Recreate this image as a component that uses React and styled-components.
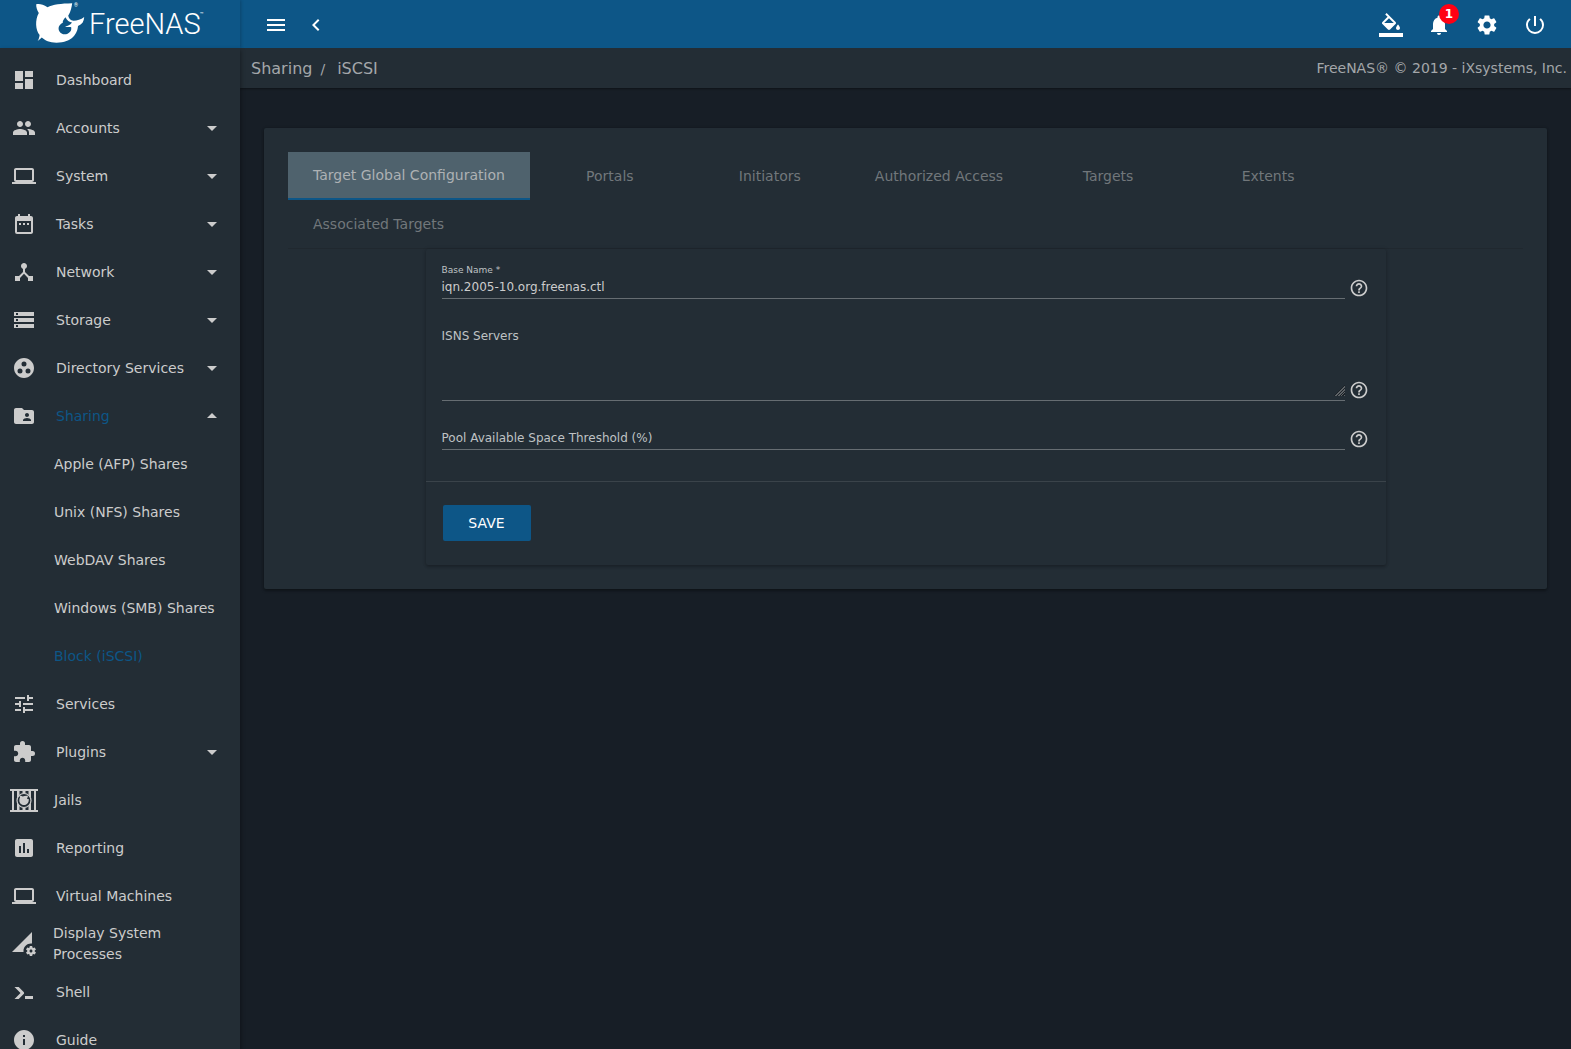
import React, {useState} from 'react';
import styled, {createGlobalStyle, css} from 'styled-components';
import {
    MdDashboard, MdPeople, MdLaptop, MdDateRange, MdDeviceHub, MdStorage, MdGroupWork,
    MdFolderShared, MdTune, MdExtension, MdAssessment, MdPermDataSetting, MdInfo,
    MdArrowDropDown, MdArrowDropUp, MdMenu, MdChevronLeft, MdNotifications, MdSettings,
    MdPowerSettingsNew, MdHelpOutline
} from 'react-icons/md';

const GlobalStyle = createGlobalStyle`
    *, *::before, *::after{
        box-sizing: border-box;
    }
    body{
        margin: 0;
        background-color: #171e26;
        color: #cccccc;
        font-family: 'DejaVu Sans', sans-serif;
        font-size: 14px;
    }
    button, input, textarea{
        font-family: inherit;
    }
`

const Page = styled.div`
    display: flex;
    flex-direction: column;
    height: 100vh;
`

const TopBar = styled.header`
    display: flex;
    flex-shrink: 0;
    height: 48px;
    background-color: #0d5687;
    color: white;
`

const Brand = styled.a`
    display: flex;
    width: 240px;
    padding-left: 34px;
    color: white;
    text-decoration: none;
    box-shadow: 1px 0 3px rgba(0,0,0,.2);
    svg{
        width: 172px;
        height: 48px;
    }
`

const TopTools = styled.div`
    display: flex;
    flex: 1;
    align-items: center;
    padding: 2px 12px 0 16px;
`

const Spacer = styled.div`
    flex: 1;
`

const IconButton = styled.button`
    position: relative;
    display: flex;
    align-items: center;
    justify-content: center;
    width: ${props => props.$narrow ? '40px' : '48px'};
    height: 46px;
    padding: 0;
    border: none;
    background: none;
    color: white;
    cursor: pointer;
    svg{
        width: 24px;
        height: 24px;
    }
`

const Badge = styled.span`
    position: absolute;
    top: 2px;
    left: 24px;
    width: 20px;
    height: 20px;
    border-radius: 50%;
    background-color: #ff0013;
    font-size: 12px;
    font-weight: bold;
    line-height: 20px;
    text-align: center;
`

const Body = styled.div`
    display: flex;
    flex: 1;
    min-height: 0;
`

const SideNav = styled.nav`
    z-index: 1;
    flex-shrink: 0;
    width: 240px;
    padding-top: 8px;
    background-color: #232d35;
    box-shadow: 1px 2px 4px rgba(0,0,0,.35);
    overflow-y: auto;
    scrollbar-width: none;
`

const NavLink = styled.a`
    display: flex;
    align-items: center;
    height: 48px;
    padding: 0 16px 0 12px;
    color: ${props => props.$active ? '#0d5687' : '#cccccc'};
    line-height: 21px;
    text-decoration: none;
    span{
        flex: 1;
        padding-left: 20px;
    }
    svg{
        flex-shrink: 0;
        width: 24px;
        height: 24px;
        color: #cccccc;
    }
    ${props => props.$wide && css`
        padding-left: 10px;
        span{
            padding-left: 16px;
        }
        svg{
            width: 28px;
            height: 28px;
        }
    `}
    ${props => props.$tight && css`
        padding-right: 48px;
        span{
            padding-left: 17px;
        }
    `}
`

const SubLink = styled(NavLink)`
    padding-left: 54px;
    span{
        padding-left: 0;
    }
`

const Main = styled.main`
    flex: 1;
    min-width: 0;
    overflow-y: auto;
`

const Crumbs = styled.div`
    display: flex;
    align-items: center;
    justify-content: space-between;
    height: 40px;
    padding: 0 4px 0 11px;
    background-color: #232d35;
    box-shadow: 0 1px 2px rgba(0,0,0,.4);
    color: #a3a7aa;
`

const Trail = styled.div`
    display: flex;
    align-items: center;
    font-size: 16px;
    a{
        color: inherit;
        text-decoration: none;
    }
    span{
        padding: 2px 12px 0 8px;
        font-size: 14px;
    }
`

const Panel = styled.section`
    margin: 40px 24px 24px;
    padding: 24px;
    border-radius: 2px;
    background-color: #232d35;
    box-shadow: 0 2px 3px rgba(0,0,0,.3), 0 0 3px rgba(0,0,0,.2);
`

const Tabs = styled.div`
    display: flex;
    flex-wrap: wrap;
    border-bottom: 1px solid #20282f;
`

const Tab = styled.button`
    min-width: 160px;
    height: 48px;
    padding: 0 25px;
    border: none;
    border-bottom: ${props => props.$active ? '2px solid #0d5687' : 'none'};
    background-color: ${props => props.$active ? '#4f626d' : 'transparent'};
    color: ${props => props.$active ? '#adb1b4' : '#71777b'};
    font-size: 14px;
    cursor: pointer;
`

const FormCard = styled.form`
    max-width: 960px;
    margin: 0 auto;
    border-radius: 2px;
    box-shadow: 0 2px 3px rgba(0,0,0,.2), 0 0 4px rgba(0,0,0,.14);
`

const Fields = styled.div`
    display: flex;
    flex-direction: column;
    gap: 30px;
    padding: 15px 16px 31px;
    border-bottom: 1px solid #3a434a;
`

const Field = styled.div`
    display: flex;
    align-items: flex-end;
    gap: 4px;
`

const Control = styled.div`
    display: grid;
    flex: 1;
    padding-bottom: 4px;
    border-bottom: 1px solid #666d72;
    input, textarea{
        display: block;
        width: 100%;
        padding: 0;
        border: none;
        outline: none;
        background: none;
        color: #cccccc;
        font-size: 12px;
        line-height: 14px;
    }
    input{
        height: 14px;
    }
    textarea{
        height: 53px;
        resize: vertical;
    }
    textarea::-webkit-resizer{
        background:
            linear-gradient(135deg, #232d35 62%, transparent 62%),
            repeating-linear-gradient(135deg, #5d6266 0 1px, #1b2127 1px 2px);
    }
`

const Label = styled.label`
    color: #bfc2c4;
    font-size: 12px;
    line-height: 14px;
    ${props => props.$small && css`
        margin-bottom: 4px;
        font-size: 9px;
        line-height: 12px;
    `}
`

// empty input, its label rests where the value would be
const RestingControl = styled(Control)`
    label, input{
        grid-area: 1 / 1;
    }
    label{
        pointer-events: none;
    }
`

const Help = styled.button`
    display: flex;
    margin: -2px 1px 1px 0;
    padding: 0;
    border: none;
    background: none;
    color: #cccccc;
    cursor: help;
    svg{
        width: 20px;
        height: 20px;
    }
`

const Actions = styled.div`
    padding: 23px 17px 24px;
`

const SaveButton = styled.button`
    min-width: 88px;
    height: 36px;
    padding: 0 16px;
    border: none;
    border-radius: 2px;
    background-color: #0d5687;
    color: white;
    font-size: 14px;
    cursor: pointer;
`

const Logo = () => (
    <svg viewBox='0 0 172 48' fill='currentColor' aria-label='FreeNAS'>
        <path fillRule='evenodd' d='M2.2 4.2C5 3.6 9 4 13.5 7.2C19 4.2 27 3.6 38.2 3.2C37.6 7 37 11 34.2 15.8C35 19 36.5 20.5 39.5 20.8C43 20.8 47 19.5 50.2 17C50 21.5 48 24.5 44 26C43.6 33 38.5 42.7 22.5 42.7C15.5 42.7 11 40.5 7.8 37.5C6.6 38.5 5.2 40 3.6 41C4.8 39.4 5.3 37.6 5.6 35C1.5 30 .8 20 4.8 13C3.2 10.6 2 7 2.2 4.2ZM31.5 17.2C29.5 19.5 28.5 21 28.8 22.8C25 24.5 23.5 28.5 25.5 31.5C27.5 35 33 35.6 36.3 31.5C37.2 30.4 37.4 29 37.2 27.2C35.5 26.6 33.6 27.6 31 26.4C34 26 36 25 38 22.4C35.6 22 32.6 20.4 31.5 17.2Z' />
        <text x='40' y='7' fontSize='5' fontFamily='Roboto, sans-serif'>®</text>
        <text x='55' y='34' fontSize='29' fontWeight='300' fontFamily='Roboto, sans-serif'>FreeNAS</text>
        <text x='166' y='16' fontSize='6' fontFamily='Roboto, sans-serif'>™</text>
    </svg>
)

const PaintIcon = () => (
    <svg viewBox='0 0 24 24' fill='currentColor'>
        <path d='M16.56 8.94L7.62 0 6.21 1.41l2.38 2.38-5.15 5.15c-.59.59-.59 1.54 0 2.12l5.5 5.5c.29.29.68.44 1.06.44s.77-.15 1.06-.44l5.5-5.5c.59-.58.59-1.53 0-2.12zM5.21 10L10 5.21 14.79 10H5.21zM19 11.5s-2 2.17-2 3.5c0 1.1.9 2 2 2s2-.9 2-2c0-1.33-2-3.5-2-3.5zM0 20h24v4H0z' />
    </svg>
)

const JailIcon = () => (
    <svg viewBox='0 0 28 28' fill='currentColor'>
        <path d='M0 3h28v2H0zM0 24h28v2H0zM2 5h2v19H2zM7 5h2.500v19H7zM18.500 5H21v19h-2.500zM24 5h2v19h-2zM12.500 5h3v3h-3zM12.500 21h3v3h-3z' />
        <circle cx='14' cy='14.500' r='7' fill='#232d35' stroke='currentColor' strokeWidth='1.200' />
        <path d='M9.500 9.800c1.500-.3 2.500.1 3.200.7 1.500-.7 3.200-.8 5.300-.7-.1 1.200-.5 2-1 2.600.5.8 1 .9 1.800.6.2 3.500-1.600 6-4.800 6-3.200 0-5-2.400-4.600-5.500.1-1 .3-1.600.7-2.100-.4-.5-.6-1-.6-1.600z' />
    </svg>
)

const ShellIcon = () => (
    <svg viewBox='0 0 24 24' fill='currentColor'>
        <path d='M13 19v-3h8v3h-8M8.500 13L2.470 7h4.240l4.960 4.950c.58.590.58 1.550 0 2.120L6.740 19H2.500l6-6z' />
    </svg>
)

const menu = [
    {name: 'Dashboard', icon: MdDashboard},
    {name: 'Accounts', icon: MdPeople, group: true},
    {name: 'System', icon: MdLaptop, group: true},
    {name: 'Tasks', icon: MdDateRange, group: true},
    {name: 'Network', icon: MdDeviceHub, group: true},
    {name: 'Storage', icon: MdStorage, group: true},
    {name: 'Directory Services', icon: MdGroupWork, group: true},
    {
        name: 'Sharing', icon: MdFolderShared, group: true, open: true,
        sub: ['Apple (AFP) Shares', 'Unix (NFS) Shares', 'WebDAV Shares', 'Windows (SMB) Shares', 'Block (iSCSI)']
    },
    {name: 'Services', icon: MdTune},
    {name: 'Plugins', icon: MdExtension, group: true},
    {name: 'Jails', icon: JailIcon, wide: true},
    {name: 'Reporting', icon: MdAssessment},
    {name: 'Virtual Machines', icon: MdLaptop},
    {name: 'Display System Processes', icon: MdPermDataSetting, tight: true},
    {name: 'Shell', icon: ShellIcon},
    {name: 'Guide', icon: MdInfo}
]

const tabs = [
    'Target Global Configuration', 'Portals', 'Initiators', 'Authorized Access',
    'Targets', 'Extents', 'Associated Targets'
]

const MenuItem = ({item}) => {
    const Icon = item.icon
    return (
        <>
            <NavLink href='#' $active={item.open} $wide={item.wide} $tight={item.tight}>
                <Icon />
                <span>{item.name}</span>
                {item.group && (item.open ? <MdArrowDropUp /> : <MdArrowDropDown />)}
            </NavLink>
            {item.sub && item.sub.map(name => (
                <SubLink key={name} href='#' $active={name === 'Block (iSCSI)'}>
                    <span>{name}</span>
                </SubLink>
            ))}
        </>
    )
}

const HelpButton = ({topic}) => (
    <Help type='button' aria-label={`Help: ${topic}`}><MdHelpOutline /></Help>
)

const TargetForm = () => {
    const [config, setConfig] = useState({
        basename: 'iqn.2005-10.org.freenas.ctl',
        servers: '',
        threshold: ''
    })

    const handleChanges = e => {
        setConfig({...config, [e.target.name]: e.target.value})
    }

    return (
        <FormCard onSubmit={e => e.preventDefault()}>
            <Fields>
                <Field>
                    <Control>
                        <Label htmlFor='basename' $small>Base Name *</Label>
                        <input id='basename' name='basename' spellCheck='false' value={config.basename} onChange={handleChanges} />
                    </Control>
                    <HelpButton topic='Base Name' />
                </Field>
                <Field>
                    <Control>
                        <Label htmlFor='servers'>ISNS Servers</Label>
                        <textarea id='servers' name='servers' value={config.servers} onChange={handleChanges} />
                    </Control>
                    <HelpButton topic='ISNS Servers' />
                </Field>
                <Field>
                    <RestingControl>
                        {!config.threshold && <Label htmlFor='threshold'>Pool Available Space Threshold (%)</Label>}
                        <input id='threshold' name='threshold' value={config.threshold} onChange={handleChanges} />
                    </RestingControl>
                    <HelpButton topic='Pool Available Space Threshold' />
                </Field>
            </Fields>
            <Actions>
                <SaveButton type='submit'>SAVE</SaveButton>
            </Actions>
        </FormCard>
    )
}

const App = () => {
    const [active, setActive] = useState(tabs[0])

    return (
        <Page>
            <GlobalStyle />
            <TopBar>
                <Brand href='#'><Logo /></Brand>
                <TopTools>
                    <IconButton $narrow aria-label='Toggle menu'><MdMenu /></IconButton>
                    <IconButton $narrow aria-label='Collapse menu'><MdChevronLeft /></IconButton>
                    <Spacer />
                    <IconButton aria-label='Themes'><PaintIcon /></IconButton>
                    <IconButton aria-label='Alerts'><MdNotifications /><Badge>1</Badge></IconButton>
                    <IconButton aria-label='Settings'><MdSettings /></IconButton>
                    <IconButton aria-label='Power'><MdPowerSettingsNew /></IconButton>
                </TopTools>
            </TopBar>
            <Body>
                <SideNav>
                    {menu.map(item => <MenuItem key={item.name} item={item} />)}
                </SideNav>
                <Main>
                    <Crumbs>
                        <Trail>
                            <a href='#'>Sharing</a>
                            <span>/</span>
                            <a href='#'>iSCSI</a>
                        </Trail>
                        <div>FreeNAS® © 2019 - iXsystems, Inc.</div>
                    </Crumbs>
                    <Panel>
                        <Tabs role='tablist'>
                            {tabs.map(name => (
                                <Tab
                                    key={name}
                                    role='tab'
                                    aria-selected={name === active}
                                    $active={name === active}
                                    onClick={() => setActive(name)}
                                >
                                    {name}
                                </Tab>
                            ))}
                        </Tabs>
                        <TargetForm />
                    </Panel>
                </Main>
            </Body>
        </Page>
    )
}

export default App
